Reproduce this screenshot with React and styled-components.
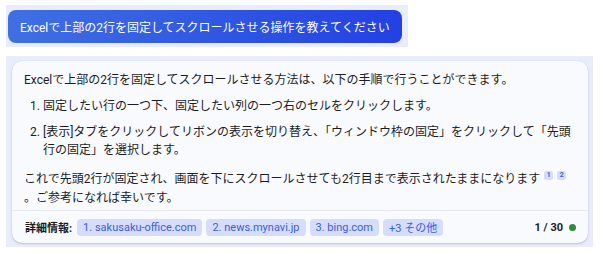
import React from "react";
import styled, { createGlobalStyle } from "styled-components";

const Global = createGlobalStyle`
  html, body { margin: 0; padding: 0; background: #ffffff; }
  body {
    font-family: "Roboto", "Noto Sans CJK JP", "Noto Sans", sans-serif;
    color: #1c1c1e;
    -webkit-font-smoothing: antialiased;
  }
`;

const Page = styled.div`
  width: 600px;
  height: 253px;
  padding: 5px 0 0 6px;
  box-sizing: border-box;
  display: flex;
  flex-direction: column;
  gap: 9px;
  overflow: hidden;
`;

const PromptStrip = styled.div`
  align-self: flex-start;
  background: #e9ecfa;
  padding: 5px 6px 4px 2px;
`;

const PromptButton = styled.div`
  height: 33px;
  box-sizing: border-box;
  padding: 0 12px;
  display: flex;
  align-items: center;
  border-radius: 8px;
  background: linear-gradient(90deg, #3e70e3 0%, #2f56e2 55%, #2440e2 100%);
  color: #ffffff;
  font-size: 12px;
  white-space: nowrap;
`;

const CardStrip = styled.div`
  width: 587px;
  background: #e9ecfa;
  padding: 5px 5px 4px 6px;
  box-sizing: border-box;
`;

const Card = styled.div`
  background: #f9fafe;
  border-radius: 10px;
  box-shadow: 0 1px 2px rgba(40, 45, 70, 0.22), 0 0 1px rgba(40, 45, 70, 0.12);
  overflow: hidden;
`;

const Body = styled.div`
  padding: 9.5px 8px 3px 12px;
  font-size: 12px;
  line-height: 18.5px;
`;

const Para = styled.p`
  margin: 0;
`;

const Steps = styled.ol`
  margin: 7.5px 0 10.5px 0;
  padding: 0 0 0 19px;
`;

const Step = styled.li`
  & + & { margin-top: 7.5px; }
`;

const Ref = styled.span`
  display: inline-block;
  width: 9px;
  height: 9px;
  margin-left: 4px;
  border-radius: 2px;
  background: #d5ddfa;
  color: #3f5fd8;
  font-size: 7px;
  line-height: 9px;
  text-align: center;
  font-weight: 700;
  vertical-align: 6px;
`;

const Footer = styled.div`
  border-top: 1px solid #e5e7ef;
  height: 32px;
  padding: 0 12px 0 13px;
  display: flex;
  align-items: center;
  gap: 4px;
  font-size: 11px;
`;

const Label = styled.span`
  font-weight: 700;
  color: #1c1c1e;
  margin-right: 1px;
`;

const Chip = styled.span`
  height: 17px;
  display: inline-flex;
  align-items: center;
  padding: 0 6px;
  border-radius: 4px;
  background: #d5ddfa;
  color: #3d5ed9;
  font-size: 11px;
  white-space: nowrap;
`;

const Counter = styled.span`
  margin-left: auto;
  display: flex;
  align-items: center;
  gap: 6px;
  font-weight: 700;
  font-size: 11px;
`;

const Dot = styled.span`
  width: 7px;
  height: 7px;
  border-radius: 50%;
  background: #2f8a3c;
`;

export default function App() {
  return (
    <>
      <Global />
      <Page>
        <PromptStrip>
          <PromptButton>Excelで上部の2行を固定してスクロールさせる操作を教えてください</PromptButton>
        </PromptStrip>
        <CardStrip>
          <Card>
            <Body>
              <Para>Excelで上部の2行を固定してスクロールさせる方法は、以下の手順で行うことができます。</Para>
              <Steps>
                <Step>固定したい行の一つ下、固定したい列の一つ右のセルをクリックします。</Step>
                <Step>[表示]タブをクリックしてリボンの表示を切り替え、「ウィンドウ枠の固定」をクリックして「先頭行の固定」を選択します。</Step>
              </Steps>
              <Para>
                これで先頭2行が固定され、画面を下にスクロールさせても2行目まで表示されたままになります
                <Ref>1</Ref>
                <Ref>2</Ref>
                <br />
                。ご参考になれば幸いです。
              </Para>
            </Body>
            <Footer>
              <Label>詳細情報:</Label>
              <Chip>1. sakusaku-office.com</Chip>
              <Chip>2. news.mynavi.jp</Chip>
              <Chip>3. bing.com</Chip>
              <Chip>+3 その他</Chip>
              <Counter>
                1 / 30
                <Dot />
              </Counter>
            </Footer>
          </Card>
        </CardStrip>
      </Page>
    </>
  );
}
